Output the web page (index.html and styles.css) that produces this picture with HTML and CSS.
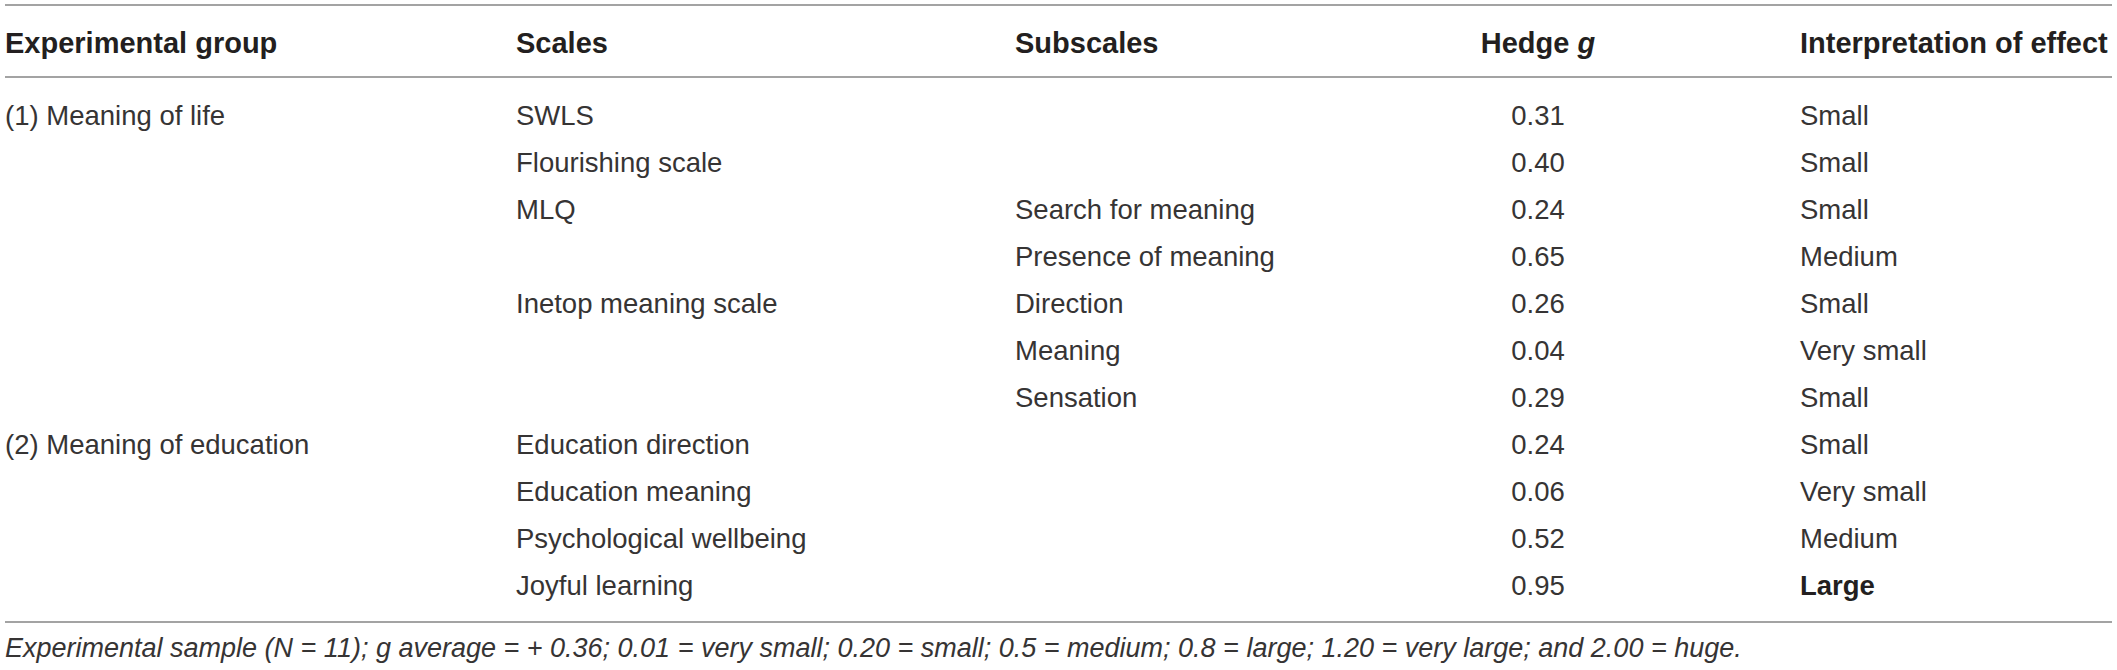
FILE: index.html
```html
<!DOCTYPE html>
<html lang="en">
<head>
<meta charset="utf-8">
<title>Effect sizes</title>
<link rel="stylesheet" href="styles.css">
</head>
<body>
<div class="wrap">
  <table class="results">
    <colgroup>
      <col class="c1"><col class="c2"><col class="c3"><col class="c4"><col class="c5">
    </colgroup>
    <thead>
      <tr>
        <th>Experimental group</th>
        <th>Scales</th>
        <th>Subscales</th>
        <th class="num">Hedge <i>g</i></th>
        <th>Interpretation of effect</th>
      </tr>
    </thead>
    <tbody>
      <tr class="first"><td>(1) Meaning of life</td><td>SWLS</td><td></td><td class="num">0.31</td><td>Small</td></tr>
      <tr><td></td><td>Flourishing scale</td><td></td><td class="num">0.40</td><td>Small</td></tr>
      <tr><td></td><td>MLQ</td><td>Search for meaning</td><td class="num">0.24</td><td>Small</td></tr>
      <tr><td></td><td></td><td>Presence of meaning</td><td class="num">0.65</td><td>Medium</td></tr>
      <tr><td></td><td>Inetop meaning scale</td><td>Direction</td><td class="num">0.26</td><td>Small</td></tr>
      <tr><td></td><td></td><td>Meaning</td><td class="num">0.04</td><td>Very small</td></tr>
      <tr><td></td><td></td><td>Sensation</td><td class="num">0.29</td><td>Small</td></tr>
      <tr><td>(2) Meaning of education</td><td>Education direction</td><td></td><td class="num">0.24</td><td>Small</td></tr>
      <tr><td></td><td>Education meaning</td><td></td><td class="num">0.06</td><td>Very small</td></tr>
      <tr><td></td><td>Psychological wellbeing</td><td></td><td class="num">0.52</td><td>Medium</td></tr>
      <tr class="last"><td></td><td>Joyful learning</td><td></td><td class="num">0.95</td><td><b>Large</b></td></tr>
    </tbody>
  </table>
  <p class="note">Experimental sample (N = 11); g average = + 0.36; 0.01 = very small; 0.20 = small; 0.5 = medium; 0.8 = large; 1.20 = very large; and 2.00 = huge.</p>
</div>
</body>
</html>
```

FILE: styles.css
```css
html, body {
  margin: 0;
  padding: 0;
  background: #ffffff;
}

body {
  font-family: "Liberation Sans", Arial, Helvetica, sans-serif;
  color: #363434;
}

.wrap {
  padding: 4px 5px 0 5px;
}

.results {
  width: 100%;
  border-collapse: collapse;
  table-layout: fixed;
  border-top: 2px solid #a3a3a3;
  border-bottom: 2px solid #a3a3a3;
}

.c1 { width: 511px; }
.c2 { width: 499px; }
.c3 { width: 261px; }
.c4 { width: 524px; }

.results th {
  font-size: 29px;
  font-weight: bold;
  line-height: 32px;
  text-align: left;
  padding: 21px 0 17px 0;
  color: #231f20;
  white-space: nowrap;
  border-bottom: 2px solid #a3a3a3;
}

.results td {
  font-size: 27.5px;
  line-height: 47px;
  padding: 0;
  white-space: nowrap;
  vertical-align: top;
}

.results .num {
  text-align: center;
}

.results tr.first td {
  padding-top: 13.5px;
}

.results tr.last td {
  padding-bottom: 12.5px;
}

.results b {
  color: #231f20;
}

.note {
  margin: 9px 0 0 0;
  font-size: 27px;
  line-height: 32px;
  font-style: italic;
  white-space: nowrap;
}
```
